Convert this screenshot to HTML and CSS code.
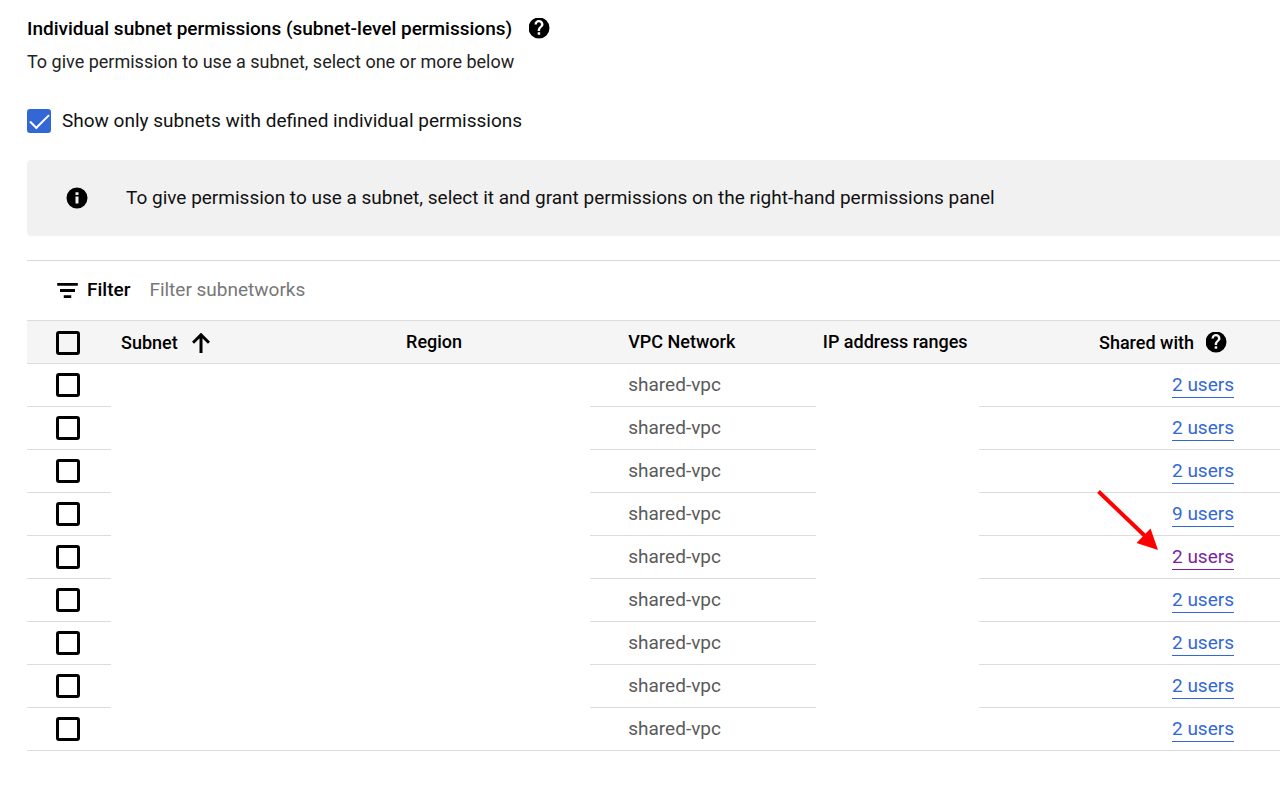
FILE: index.html
```
<!DOCTYPE html>
<html lang="en">
<head>
<meta charset="utf-8">
<meta name="viewport" content="width=device-width, initial-scale=1">
<title>Individual subnet permissions</title>
<link rel="stylesheet" href="styles.css">
</head>
<body>
<main class="page">
  <header class="heading">
    <h1 class="title">Individual subnet permissions (subnet-level permissions)</h1>
    <button class="icon-button" type="button" aria-label="Help">
      <svg class="icon" viewBox="1 1 22 22"><use href="#help"/></svg>
    </button>
  </header>
  <p class="subtitle">To give permission to use a subnet, select one or more below</p>

  <label class="option"><input class="check" type="checkbox" checked><span>Show only subnets with defined individual permissions</span></label>

  <section class="notice">
    <svg class="icon" viewBox="1 1 22 22" aria-hidden="true"><path d="M12 1.500a10.500 10.500 0 1 0 0 21 10.500 10.500 0 0 0 0-21zm1.500 15.900h-3v-6.800h3zm0-8.400h-3V6.300h3z"/></svg>
    <p class="notice-text">To give permission to use a subnet, select it and grant permissions on the right-hand permissions panel</p>
  </section>

  <section class="subnets">
    <div class="filter">
      <label class="filter-label" for="filter">
        <svg class="filter-icon" viewBox="0 0 22 16" aria-hidden="true"><path d="M0 0h22v3H0zM3 6.500h16v3H3zM7 13h8v3H7z"/></svg>
        Filter
      </label>
      <input class="filter-input" id="filter" type="text" placeholder="Filter subnetworks">
    </div>
    <table class="table">
      <colgroup><col class="col-check"><col class="col-subnet"><col class="col-region"><col class="col-network"><col class="col-range"><col></colgroup>
      <thead>
        <tr>
          <th class="pick"><input class="check" type="checkbox" aria-label="Select all"></th>
          <th class="subnet"><span class="th-group">Subnet <svg class="sort" viewBox="0 0 18 20" aria-hidden="true"><path d="M9 20V2M1 9.800l8-8 8 8"/></svg></span></th>
          <th class="region">Region</th>
          <th class="network">VPC Network</th>
          <th class="range">IP address ranges</th>
          <th class="shared"><span class="th-group">Shared with <button class="icon-button" type="button" aria-label="Help"><svg class="icon" viewBox="1 1 22 22"><use href="#help"/></svg></button></span></th>
        </tr>
      </thead>
      <tbody>
        <tr><td class="pick"><input class="check" type="checkbox" aria-label="Select subnet"></td><td class="subnet"></td><td class="region"></td><td class="network">shared-vpc</td><td class="range"></td><td class="shared"><a class="link" href="#">2 users</a></td></tr>
        <tr><td class="pick"><input class="check" type="checkbox" aria-label="Select subnet"></td><td class="subnet"></td><td class="region"></td><td class="network">shared-vpc</td><td class="range"></td><td class="shared"><a class="link" href="#">2 users</a></td></tr>
        <tr><td class="pick"><input class="check" type="checkbox" aria-label="Select subnet"></td><td class="subnet"></td><td class="region"></td><td class="network">shared-vpc</td><td class="range"></td><td class="shared"><a class="link" href="#">2 users</a></td></tr>
        <tr><td class="pick"><input class="check" type="checkbox" aria-label="Select subnet"></td><td class="subnet"></td><td class="region"></td><td class="network">shared-vpc</td><td class="range"></td><td class="shared"><a class="link" href="#">9 users</a></td></tr>
        <tr><td class="pick"><input class="check" type="checkbox" aria-label="Select subnet"></td><td class="subnet"></td><td class="region"></td><td class="network">shared-vpc</td><td class="range"></td><td class="shared"><a class="link link-visited" href="#">2 users<svg class="pointer" viewBox="0 0 62 62" aria-hidden="true"><path class="pointer-line" d="M1.500 1.500L48 46"/><path class="pointer-head" d="M61 60L39.500 53 53.500 38.500z"/></svg></a></td></tr>
        <tr><td class="pick"><input class="check" type="checkbox" aria-label="Select subnet"></td><td class="subnet"></td><td class="region"></td><td class="network">shared-vpc</td><td class="range"></td><td class="shared"><a class="link" href="#">2 users</a></td></tr>
        <tr><td class="pick"><input class="check" type="checkbox" aria-label="Select subnet"></td><td class="subnet"></td><td class="region"></td><td class="network">shared-vpc</td><td class="range"></td><td class="shared"><a class="link" href="#">2 users</a></td></tr>
        <tr><td class="pick"><input class="check" type="checkbox" aria-label="Select subnet"></td><td class="subnet"></td><td class="region"></td><td class="network">shared-vpc</td><td class="range"></td><td class="shared"><a class="link" href="#">2 users</a></td></tr>
        <tr><td class="pick"><input class="check" type="checkbox" aria-label="Select subnet"></td><td class="subnet"></td><td class="region"></td><td class="network">shared-vpc</td><td class="range"></td><td class="shared"><a class="link" href="#">2 users</a></td></tr>
      </tbody>
    </table>
  </section>
</main>
<svg class="symbols" aria-hidden="true">
  <symbol id="help" viewBox="1 1 22 22"><path d="M12 1.500a10.500 10.500 0 1 0 0 21 10.500 10.500 0 0 0 0-21zm1.200 17.300h-2.500v-2.500h2.500zm2.300-8.100l-1.100 1.100c-.9.900-1.300 1.600-1.300 3.100h-2.400v-.6c0-1.300.5-2.300 1.300-3.100l1.400-1.400c.4-.4.600-.9.600-1.400a2.100 2.100 0 0 0-4.200 0H7.500a4.500 4.500 0 0 1 9 0c0 .9-.4 1.700-1 2.300z"/></symbol>
</svg>
</body>
</html>
```
FILE: styles.css
```
* {
  box-sizing: border-box;
}

body {
  margin: 0;
  background: #fff;
  color: #111;
  font-family: Roboto, "Liberation Sans", sans-serif;
  font-size: 19px;
  line-height: 24px;
}

.page {
  padding: 17px 0 40px 27px;
}

.heading {
  display: flex;
  align-items: center;
  gap: 17px;
}

.title {
  margin: 0;
  color: #000;
  font-size: 19px;
  font-weight: 500;
}

.subtitle {
  margin: 9px 0 0;
  color: #222;
  font-size: 18px;
}

.icon-button {
  display: flex;
  padding: 0;
  border: 0;
  background: none;
  color: #000;
}

.icon {
  flex: none;
  width: 22px;
  height: 22px;
  fill: #000;
}

.option {
  display: flex;
  align-items: center;
  gap: 11px;
  margin-top: 35px;
}

.check {
  display: block;
  flex: none;
  appearance: none;
  width: 24px;
  height: 24px;
  margin: 0;
  border: 3px solid #000;
  border-radius: 3px;
}

.check:checked {
  border: 0;
  background: #3367d6;
}

.check:checked::before {
  content: "";
  display: block;
  width: 17px;
  height: 8px;
  margin: 6px 3px;
  border: solid #fff;
  border-width: 0 0 2px 2px;
  transform: translateY(-1px) rotate(-45deg);
}

.notice {
  display: flex;
  align-items: center;
  gap: 38px;
  margin-top: 27px;
  padding: 26px 39px;
  border-radius: 4px 0 0 4px;
  background: #f1f1f1;
}

.notice-text {
  margin: 0;
}

.subnets {
  margin-top: 24px;
  border-top: 1px solid #dadada;
}

.filter {
  display: flex;
  align-items: center;
  gap: 19px;
  padding: 17px 30px 18px;
}

.filter-label {
  display: flex;
  align-items: center;
  gap: 9px;
  color: #000;
  font-weight: 500;
}

.filter-icon {
  width: 21px;
  height: 15px;
}

.filter-input {
  flex: 1;
  height: 24px;
  padding: 0;
  border: 0;
  outline: 0;
  background: none;
  font: inherit;
}

.filter-input::placeholder {
  color: #777;
}

.table {
  width: 100%;
  border-collapse: separate;
  border-spacing: 0;
  table-layout: fixed;
}

.col-check {
  width: 84px;
}

.col-subnet {
  width: 22.75%;
}

.col-region {
  width: 15.5%;
}

.col-network {
  width: 18%;
}

.col-range {
  width: 13%;
}

.table th {
  height: 44px;
  padding: 0 0 0 10px;
  border: solid #dcdcdc;
  border-width: 1px 0;
  background: #f5f5f5;
  color: #000;
  font-size: 18px;
  font-weight: 500;
  text-align: left;
  white-space: nowrap;
}

.th-group {
  display: inline-flex;
  align-items: center;
  gap: 12px;
  vertical-align: middle;
}

.sort {
  width: 18px;
  height: 20px;
  margin-left: 2px;
  fill: none;
  stroke: #000;
  stroke-width: 3;
}

.table td {
  height: 43px;
  padding: 0;
  border-bottom: 1px solid #dcdcdc;
  color: #5a5a5a;
}

.table tbody tr:not(:last-child) .subnet,
.table tbody tr:not(:last-child) .region,
.table tbody tr:not(:last-child) .range {
  border-bottom-color: transparent;
}

.table .pick {
  padding-left: 29px;
}

.table th.pick {
  padding-top: 2px;
}

.table .network {
  padding-left: 38px;
}

.table .range {
  padding-left: 7px;
}

.table .shared {
  padding-right: 46px;
  text-align: right;
}

.table th.shared {
  padding-right: 52px;
}

.link {
  display: inline-block;
  position: relative;
  border-bottom: 1px solid currentColor;
  color: #3367d6;
  text-decoration: none;
}

.link-visited {
  color: #7b1fa2;
}

.pointer {
  position: absolute;
  right: 75px;
  bottom: 17px;
  width: 62px;
  height: 62px;
}

.pointer-line {
  fill: none;
  stroke: #f00;
  stroke-width: 4;
}

.pointer-head {
  fill: #f00;
}

.symbols {
  display: none;
}
```
